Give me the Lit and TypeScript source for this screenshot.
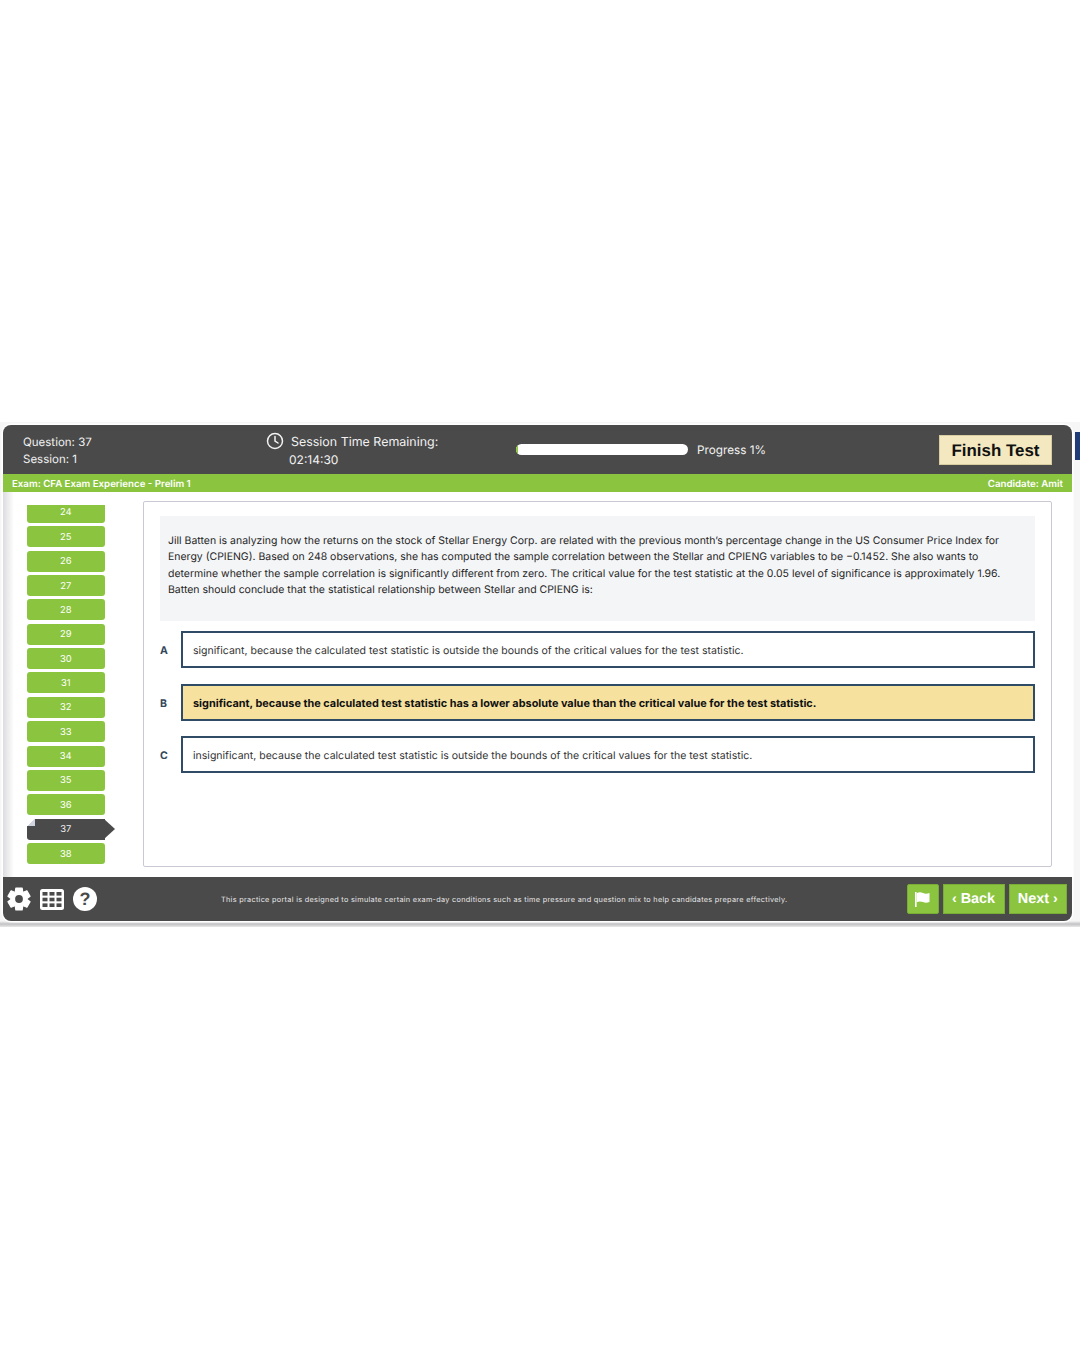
import { LitElement, html, css, svg } from "lit";
import { customElement } from "lit/decorators.js";

/* Six-toothed cog, built from polar points so each tooth stays identical. */
function cogPath(): string {
  const c = 12;
  const pts: string[] = [];
  for (let i = 0; i < 6; i++) {
    const a = (i * Math.PI) / 3 - Math.PI / 2;
    const offsets: [number, number][] = [
      [-0.48, 8],
      [-0.28, 11.4],
      [0.28, 11.4],
      [0.48, 8],
    ];
    for (const [da, r] of offsets) {
      pts.push(`${(c + r * Math.cos(a + da)).toFixed(2)} ${(c + r * Math.sin(a + da)).toFixed(2)}`);
    }
  }
  return `M${pts.join("L")}Z`;
}

const gearIcon = svg`
  <path fill="#fff" stroke="#fff" stroke-width="1.2" stroke-linejoin="round" d=${cogPath()}></path>
  <circle cx="12" cy="12" r="3.9" fill="#4a4a4a"></circle>`;

@customElement("app-root")
export class AppRoot extends LitElement {
  static styles = css`
    :host {
      display: block;
      position: relative;
      height: 1350px;
      background: #fff;
      overflow: hidden;
      font-family: Inter, "Liberation Sans", sans-serif;
      color: #2b2b2b;
      text-rendering: geometricPrecision;
    }
    .band {
      position: absolute;
      left: 0;
      right: 0;
      top: 422px;
      height: 505px;
      background: linear-gradient(180deg, #f6f6f7 0, #f6f6f7 499px, #c2c2c4 502px, #e8e8e8 505px);
    }
    .edge {
      position: absolute;
      top: 432px;
      right: 0;
      width: 5px;
      height: 28px;
      background: #1f3c78;
    }
    .frame {
      position: absolute;
      left: 3px;
      top: 425px;
      width: 1069px;
      border-radius: 8px;
      overflow: hidden;
      background: #fff;
      box-shadow: 0 0 0 1.5px #fff;
    }
    .header {
      height: 49px;
      background: #4a4a4a;
      color: #f2f2f2;
      display: grid;
      grid-template-columns: 243px 250px 243px 1fr;
      align-items: center;
      font-size: 11.5px;
      padding-left: 20px;
      box-sizing: border-box;
    }
    .qinfo {
      line-height: 17px;
      padding-top: 2px;
    }
    .timer {
      display: grid;
      grid-template-columns: 18px auto;
      column-gap: 7px;
      font-size: 12.45px;
      line-height: 17px;
      align-items: center;
      padding-top: 3px;
    }
    .timer svg {
      display: block;
      margin-top: -3px;
    }
    .clock {
      grid-column: 1 / 3;
      padding-left: 23px;
      font-size: 12px;
    }
    .progress {
      display: flex;
      align-items: center;
      gap: 9px;
      font-size: 11.75px;
      white-space: nowrap;
    }
    .track {
      flex: none;
      width: 172px;
      height: 11px;
      border-radius: 6px;
      background: #fff;
      overflow: hidden;
    }
    .fill {
      height: 100%;
      background: #8cc63f;
    }
    .finish {
      justify-self: end;
      margin: 1px 20px 0 0;
      padding-top: 1px;
      width: 113px;
      height: 30px;
      box-sizing: border-box;
      background: #f3e8bf;
      border: 1px solid #d8cda0;
      color: #111;
      font-size: 16.9px;
      font-weight: 700;
      font-family: "Liberation Sans", Arial, sans-serif;
      display: flex;
      align-items: center;
      justify-content: center;
    }
    .strip {
      box-sizing: border-box;
      height: 18px;
      background: #8bc53f;
      color: #fff;
      font-size: 9.7px;
      font-weight: 600;
      display: flex;
      justify-content: space-between;
      align-items: center;
      padding: 2px 9px 0;
    }
    .body {
      height: 385px;
      display: flex;
      background: linear-gradient(90deg, #dcdcdf 0, #fff 11px);
    }
    .side {
      box-sizing: border-box;
      width: 140px;
      flex: none;
      height: 385px;
      padding: 13px 0 13px 24px;
    }
    .list {
      height: 359px;
      overflow: hidden;
      display: flex;
      flex-direction: column;
      justify-content: flex-end;
      gap: 3.36px;
    }
    .q {
      flex: none;
      position: relative;
      box-sizing: border-box;
      width: 77.5px;
      height: 21px;
      padding-top: 1px;
      background: #8bc53f;
      border-radius: 3px;
      color: #fff;
      font-size: 9.4px;
      display: flex;
      align-items: center;
      justify-content: center;
    }
    .q.cur {
      background: #4a4a4a;
      color: #eee;
      border-radius: 0 0 0 3px;
    }
    .q.cur::after {
      content: "";
      position: absolute;
      left: 77px;
      top: 0;
      border-left: 11px solid #4a4a4a;
      border-top: 10.5px solid transparent;
      border-bottom: 10.5px solid transparent;
    }
    .q.cur::before {
      content: "";
      position: absolute;
      left: 0;
      top: 0;
      width: 8px;
      height: 7px;
      background: linear-gradient(to bottom right, #fff 50%, #cfd4e0 50%);
    }
    .panel {
      box-sizing: border-box;
      width: 909px;
      height: 366px;
      margin-top: 9px;
      border: 1px solid #c9c9d3;
      border-radius: 2px;
      padding: 14px 16px 0;
      background: #fff;
    }
    .stem {
      box-sizing: border-box;
      height: 105px;
      background: #f4f5f7;
      padding: 17px 8px 0;
      font-size: 10.49px;
      line-height: 16.3px;
      color: #262626;
      white-space: nowrap;
    }
    .opts {
      display: flex;
      flex-direction: column;
      gap: 15.5px;
      margin-top: 10px;
    }
    .opt {
      display: grid;
      grid-template-columns: 21px 1fr;
      align-items: center;
    }
    .letter {
      font-size: 10.5px;
      font-weight: 700;
      color: #33475b;
      padding: 2px 0 0 0;
    }
    .box {
      box-sizing: border-box;
      height: 37px;
      border: 2px solid #2f4b66;
      padding: 2px 0 0 10px;
      display: flex;
      align-items: center;
      font-size: 10.54px;
      background: #fff;
      color: #333;
    }
    .opt.sel .box {
      background: #f6e19e;
      color: #111;
      font-weight: 700;
      font-size: 10.88px;
    }
    .footer {
      height: 44px;
      background: #4a4a4a;
      display: flex;
      align-items: center;
      padding: 0 5px 0 4px;
    }
    .tools {
      display: flex;
      align-items: center;
      gap: 9px;
      width: 214px;
      flex: none;
    }
    .tools svg {
      display: block;
    }
    .help {
      width: 24px;
      height: 24px;
      border-radius: 50%;
      background: #fff;
      color: #4a4a4a;
      font-size: 18px;
      font-weight: 700;
      font-family: "Liberation Sans", Arial, sans-serif;
      display: flex;
      align-items: center;
      justify-content: center;
    }
    .note {
      flex: 1;
      font-size: 7.3px;
      letter-spacing: 0.3px;
      color: #e8e8e8;
      white-space: nowrap;
    }
    .btns {
      display: flex;
      gap: 4px;
    }
    .btn {
      box-sizing: border-box;
      height: 30px;
      background: #8bc53f;
      border: 1px solid #79ad35;
      color: #fff;
      font-size: 14.4px;
      font-weight: 700;
      font-family: "Liberation Sans", Arial, sans-serif;
      display: flex;
      align-items: center;
      justify-content: center;
    }
    .flag {
      width: 31.5px;
      border-radius: 2px;
    }
    .back {
      width: 62px;
    }
    .next {
      width: 58.5px;
    }
  `;

  render() {
    const nums = Array.from({ length: 15 }, (_, i) => 24 + i);
    return html`
      <div class="band"></div>
      <div class="edge"></div>
      <div class="frame">
        <div class="header">
          <div class="qinfo"><div>Question: 37</div><div>Session: 1</div></div>
          <div class="timer">
            <svg width="18" height="18" viewBox="0 0 18 18" fill="none" stroke="#f2f2f2" stroke-width="1.5" stroke-linecap="round">
              <circle cx="9" cy="9" r="7.5"></circle>
              <path d="M9 4.5V9l3 2"></path>
            </svg>
            <span>Session Time Remaining:</span>
            <span class="clock">02:14:30</span>
          </div>
          <div class="progress">
            <div class="track"><div class="fill" style="width:1%"></div></div>
            <span>Progress 1%</span>
          </div>
          <div class="finish">Finish Test</div>
        </div>
        <div class="strip"><span>Exam: CFA Exam Experience - Prelim 1</span><span>Candidate: Amit</span></div>
        <div class="body">
          <div class="side">
            <div class="list">
              ${nums.map((n) => html`<div class="q ${n === 37 ? "cur" : ""}">${n}</div>`)}
            </div>
          </div>
          <div class="panel">
            <div class="stem">
              Jill Batten is analyzing how the returns on the stock of Stellar Energy Corp. are related with the previous month’s percentage change in the US Consumer Price Index for<br />
              Energy (CPIENG). Based on 248 observations, she has computed the sample correlation between the Stellar and CPIENG variables to be −0.1452. She also wants to<br />
              determine whether the sample correlation is significantly different from zero. The critical value for the test statistic at the 0.05 level of significance is approximately 1.96.<br />
              Batten should conclude that the statistical relationship between Stellar and CPIENG is:
            </div>
            <div class="opts">
              <div class="opt"><span class="letter">A</span><div class="box">significant, because the calculated test statistic is outside the bounds of the critical values for the test statistic.</div></div>
              <div class="opt sel"><span class="letter">B</span><div class="box">significant, because the calculated test statistic has a lower absolute value than the critical value for the test statistic.</div></div>
              <div class="opt"><span class="letter">C</span><div class="box">insignificant, because the calculated test statistic is outside the bounds of the critical values for the test statistic.</div></div>
            </div>
          </div>
        </div>
        <div class="footer">
          <div class="tools">
            <svg width="24" height="24" viewBox="0 0 24 24">${gearIcon}</svg>
            <svg width="24" height="21" viewBox="0 0 24 21">
              <rect width="24" height="21" rx="2.5" fill="#fff"></rect>
              <g fill="#4a4a4a">
                <rect x="2.5" y="3" width="5" height="3.6"></rect><rect x="9.5" y="3" width="5" height="3.6"></rect><rect x="16.5" y="3" width="5" height="3.6"></rect>
                <rect x="2.5" y="8.7" width="5" height="3.6"></rect><rect x="9.5" y="8.7" width="5" height="3.6"></rect><rect x="16.5" y="8.7" width="5" height="3.6"></rect>
                <rect x="2.5" y="14.4" width="5" height="3.6"></rect><rect x="9.5" y="14.4" width="5" height="3.6"></rect><rect x="16.5" y="14.4" width="5" height="3.6"></rect>
              </g>
            </svg>
            <div class="help">?</div>
          </div>
          <div class="note">This practice portal is designed to simulate certain exam-day conditions such as time pressure and question mix to help candidates prepare effectively.</div>
          <div class="btns">
            <div class="btn flag">
              <svg width="17" height="17" viewBox="0 0 17 17" fill="#fff"><path d="M1 1h1.6v15H1z"></path><path d="M2.6 2.2c2.2-1.3 4.4-1.2 6.4-.2 2 .9 4 .9 6.5 0v9c-2.5 1-4.5 1-6.5.1-2-.9-4.2-1-6.4.1z"></path></svg>
            </div>
            <div class="btn back">‹ Back</div>
            <div class="btn next">Next ›</div>
          </div>
        </div>
      </div>
    `;
  }
}
